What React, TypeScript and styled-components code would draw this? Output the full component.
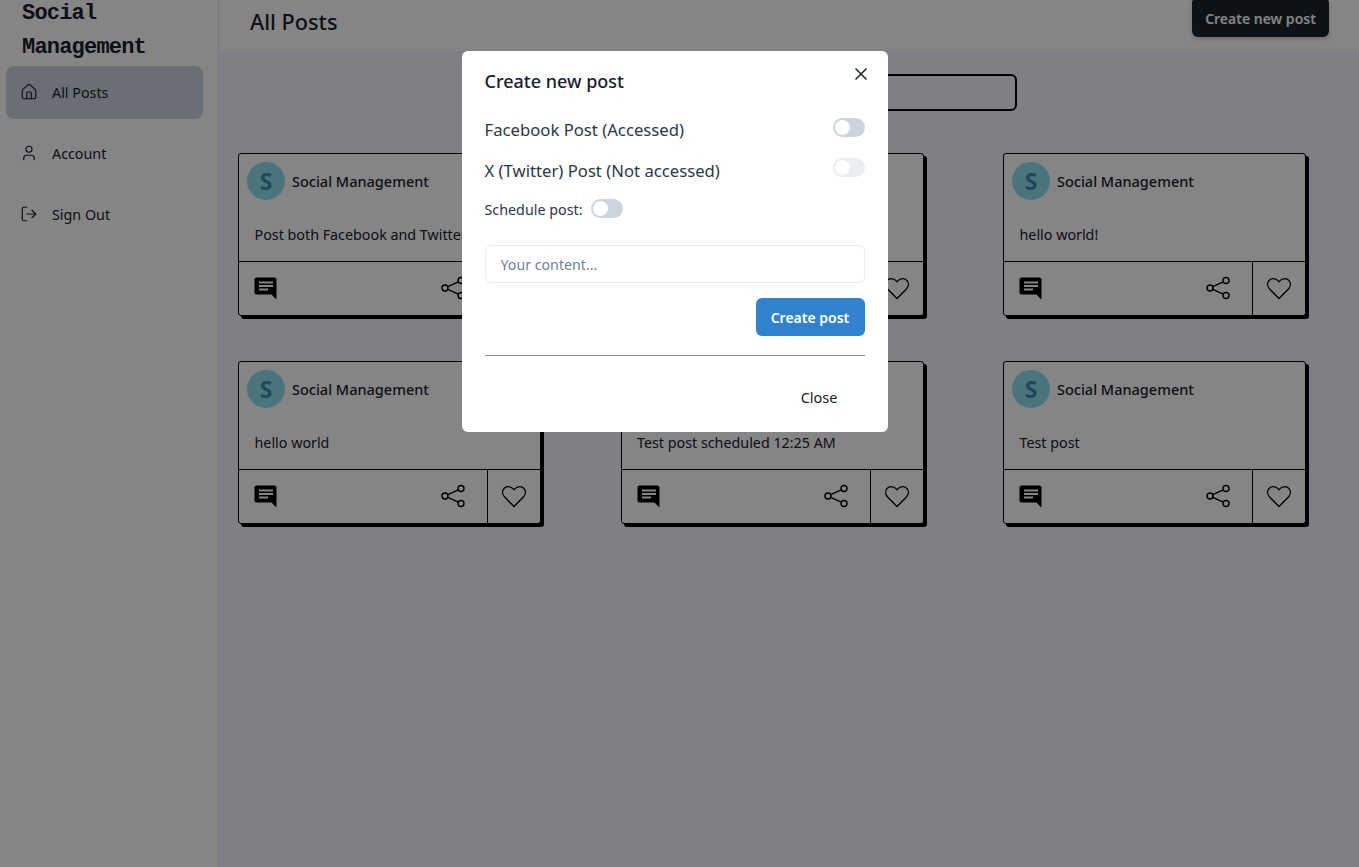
import React from 'react';
import styled, { createGlobalStyle } from 'styled-components';
import { House, User, LogOut } from 'lucide-react';

const GlobalStyle = createGlobalStyle`
  html, body {
    margin: 0;
    height: 100%;
    overflow: hidden;
    background: #f2f6ff;
    font-family: "Noto Sans", "Open Sans", sans-serif;
    color: #1a202c;
  }
  * {
    box-sizing: border-box;
  }
`;

/* the page in the picture is scrolled down a little */
const Shell = styled.div`
  display: flex;
  min-height: 881px;
  margin-top: -14px;
`;

const Sidebar = styled.aside`
  width: 219px;
  flex-shrink: 0;
  background: #fff;
  border-right: 1px solid #e6e6e6;
  padding: 11px 15px 0 6px;
`;

const Brand = styled.div`
  font-family: "Liberation Mono", monospace;
  font-weight: 700;
  font-size: 22px;
  line-height: 34px;
  letter-spacing: -0.8px;
  padding-left: 16px;
  margin-bottom: 1px;
`;

const Nav = styled.nav`
  display: flex;
  flex-direction: column;
  gap: 8px;
`;

const NavItem = styled.div<{ $active?: boolean }>`
  display: flex;
  align-items: center;
  gap: 14px;
  height: 53px;
  padding: 0 0 1px 14px;
  border-radius: 8px;
  font-size: 14.3px;
  background: ${(p) => (p.$active ? '#cbd5e0' : 'transparent')};
`;

const Main = styled.main`
  flex: 1;
  min-width: 0;
`;

const Header = styled.header`
  display: flex;
  justify-content: space-between;
  height: 65px;
  padding: 11px 30px 0 31px;
  background: #fff;
`;

const PageTitle = styled.h1`
  margin: 8px 0 0;
  font-size: 21.7px;
  line-height: 34px;
  font-weight: 500;
`;

const NewPostButton = styled.button`
  width: 137px;
  height: 40px;
  padding: 2px 0 0;
  border: 0;
  border-radius: 6px;
  background: #17232a;
  color: #fff;
  font: 600 14px "Noto Sans", sans-serif;
  box-shadow: 0 2px 4px rgba(0, 0, 0, 0.2);
`;

const SearchRow = styled.div`
  display: flex;
  justify-content: center;
  padding-top: 23px;
`;

const SearchBox = styled.input`
  width: 456px;
  height: 37px;
  border: 2px solid #000;
  border-radius: 6px;
  background: transparent;
  outline: none;
`;

const PostGrid = styled.div`
  display: grid;
  grid-template-columns: repeat(3, 303px);
  column-gap: 79.5px;
  row-gap: 45px;
  padding: 42px 0 0 19px;
`;

const Card = styled.article`
  display: flex;
  flex-direction: column;
  height: 163px;
  background: #fff;
  border: 1px solid #000;
  border-radius: 3px;
  box-shadow: 3px 3px 0 #000;
`;

const CardHeader = styled.div`
  display: flex;
  align-items: center;
  gap: 7px;
  padding: 8px;
`;

const Avatar = styled.div`
  display: flex;
  align-items: center;
  justify-content: center;
  width: 38px;
  height: 38px;
  border-radius: 50%;
  background: #8fe0ee;
  color: #3f8fb0;
  font-size: 23px;
  font-weight: 700;
`;

const AuthorName = styled.span`
  font-size: 14.5px;
  font-weight: 500;
`;

const CardBody = styled.div`
  flex: 1;
  display: flex;
  align-items: center;
  padding-left: 15.5px;
  font-size: 14.3px;
  white-space: nowrap;
`;

const CardFooter = styled.div`
  display: flex;
  height: 54px;
  border-top: 1px solid #000;
`;

const FooterActions = styled.div`
  flex: 1;
  display: flex;
  align-items: center;
  justify-content: space-between;
  padding: 0 21px 2px 14px;
`;

const LikeCell = styled.div`
  display: flex;
  align-items: center;
  justify-content: center;
  width: 53px;
  padding-bottom: 2px;
  border-left: 1px solid #000;
`;

const Overlay = styled.div`
  position: fixed;
  inset: 0;
  display: flex;
  justify-content: center;
  padding: 51px 10px 0 0;
  background: rgba(0, 0, 0, 0.48);
`;

const Modal = styled.section`
  position: relative;
  width: 426px;
  height: 381px;
  padding: 0 23px;
  background: #fff;
  border-radius: 6px;
`;

const ModalTitle = styled.h2`
  margin: 0;
  height: 67px;
  padding-top: 16px;
  font-size: 18px;
  line-height: 28px;
  font-weight: 500;
  color: #1a202c;
`;

const CloseIcon = styled.button`
  position: absolute;
  top: 14px;
  right: 18px;
  display: flex;
  width: 18px;
  height: 18px;
  padding: 0;
  align-items: center;
  justify-content: center;
  border: 0;
  background: none;
  color: #1a202c;
`;

const ToggleRow = styled.div`
  display: flex;
  align-items: flex-start;
  justify-content: space-between;
  height: 25px;
  font-size: 16.7px;
  line-height: 24px;
  color: #2d3748;

  & + & {
    margin-top: 16px;
  }
`;

const ScheduleRow = styled.div`
  display: flex;
  align-items: flex-start;
  gap: 8px;
  height: 19px;
  margin-top: 15px;
  font-size: 14.3px;
  line-height: 22px;
  color: #2d3748;
`;

const Switch = styled.span<{ $disabled?: boolean }>`
  display: flex;
  width: 32px;
  height: 19px;
  padding: 2px;
  border-radius: 10px;
  background: #cbd5e0;
  opacity: ${(p) => (p.$disabled ? 0.4 : 1)};
  margin-top: ${(p) => (p.$disabled ? '-1px' : '0')};

  &::before {
    content: '';
    width: 15px;
    height: 15px;
    border-radius: 50%;
    background: #fff;
  }
`;

const ContentInput = styled.input`
  display: block;
  width: 100%;
  height: 38px;
  margin-top: 27px;
  padding: 0 15px;
  border: 1px solid #e8edf4;
  border-radius: 6px;
  outline: none;
  font: 14.2px "Noto Sans", sans-serif;

  &::placeholder {
    color: #718096;
    opacity: 1;
  }
`;

const SubmitRow = styled.div`
  display: flex;
  justify-content: flex-end;
  margin-top: 15px;
`;

const SubmitButton = styled.button`
  width: 109px;
  height: 38px;
  border: 0;
  border-radius: 6px;
  background: #3182ce;
  color: #fff;
  font: 600 14px "Noto Sans", sans-serif;
`;

const Divider = styled.hr`
  margin: 19px 0 0;
  border: 0;
  border-top: 1px solid #8a8a8a;
`;

const ModalFooter = styled.div`
  display: flex;
  justify-content: flex-end;
  padding: 21px 11px 0 0;
`;

const CloseButton = styled.button`
  height: 40px;
  padding: 0 16px;
  border: 0;
  background: none;
  color: #1a202c;
  font: 14.5px "Noto Sans", sans-serif;
`;

const CommentIcon = () => (
  <svg width="25" height="25" viewBox="0 0 25 25" fill="#000">
    <path
      fillRule="evenodd"
      d="M3.5 2.5h18c1 0 2 1 2 2v20l-5-5h-15c-1 0-2-1-2-2v-13c0-1 1-2 2-2zM6 6.500v2h14v-2zM6 10v2h14v-2zM6 13.500v2h9v-2z"
    />
  </svg>
);

const ShareIcon = () => (
  <svg width="26" height="26" viewBox="0 0 26 26" fill="none" stroke="#000" strokeWidth="1.4">
    <circle cx="5" cy="13" r="3" />
    <circle cx="21" cy="5.500" r="3" />
    <circle cx="21" cy="20.500" r="3" />
    <path d="M7.700 11.700 18.300 6.800M7.700 14.300l10.600 4.900" />
  </svg>
);

const HeartIcon = () => (
  <svg width="26" height="26" viewBox="0 0 26 26" fill="none" stroke="#000" strokeWidth="1.4">
    <path d="M13 23.500 3.600 14C1.300 11.600 1 8 2.900 5.600 5.100 2.900 9.700 2.600 13 6.600c3.300-4 7.900-3.700 10.100-1 1.900 2.400 1.600 6-.7 8.400z" />
  </svg>
);

const POSTS = [
  'Post both Facebook and Twitter',
  'hello world!',
  'hello world!',
  'hello world',
  'Test post scheduled 12:25 AM',
  'Test post',
];

const App: React.FC = () => {
  return (
    <>
      <GlobalStyle />
      <Shell>
        <Sidebar>
          <Brand>
            Social
            <br />
            Management
          </Brand>
          <Nav>
            <NavItem $active>
              <House size={18} strokeWidth={1.6} />
              All Posts
            </NavItem>
            <NavItem>
              <User size={18} strokeWidth={1.6} />
              Account
            </NavItem>
            <NavItem>
              <LogOut size={18} strokeWidth={1.6} />
              Sign Out
            </NavItem>
          </Nav>
        </Sidebar>
        <Main>
          <Header>
            <PageTitle>All Posts</PageTitle>
            <NewPostButton>Create new post</NewPostButton>
          </Header>
          <SearchRow>
            <SearchBox />
          </SearchRow>
          <PostGrid>
            {POSTS.map((text, i) => (
              <Card key={i}>
                <CardHeader>
                  <Avatar>S</Avatar>
                  <AuthorName>Social Management</AuthorName>
                </CardHeader>
                <CardBody>{text}</CardBody>
                <CardFooter>
                  <FooterActions>
                    <CommentIcon />
                    <ShareIcon />
                  </FooterActions>
                  <LikeCell>
                    <HeartIcon />
                  </LikeCell>
                </CardFooter>
              </Card>
            ))}
          </PostGrid>
        </Main>
      </Shell>
      <Overlay>
        <Modal>
          <ModalTitle>Create new post</ModalTitle>
          <CloseIcon>
            <svg width="12" height="12" viewBox="0 0 12 12" stroke="currentColor" strokeWidth="1.5">
              <path d="M.5.5l11 11M11.500.5l-11 11" />
            </svg>
          </CloseIcon>
          <ToggleRow>
            Facebook Post (Accessed)
            <Switch />
          </ToggleRow>
          <ToggleRow>
            X (Twitter) Post (Not accessed)
            <Switch $disabled />
          </ToggleRow>
          <ScheduleRow>
            Schedule post:
            <Switch />
          </ScheduleRow>
          <ContentInput placeholder="Your content..." />
          <SubmitRow>
            <SubmitButton>Create post</SubmitButton>
          </SubmitRow>
          <Divider />
          <ModalFooter>
            <CloseButton>Close</CloseButton>
          </ModalFooter>
        </Modal>
      </Overlay>
    </>
  );
};

export default App;
